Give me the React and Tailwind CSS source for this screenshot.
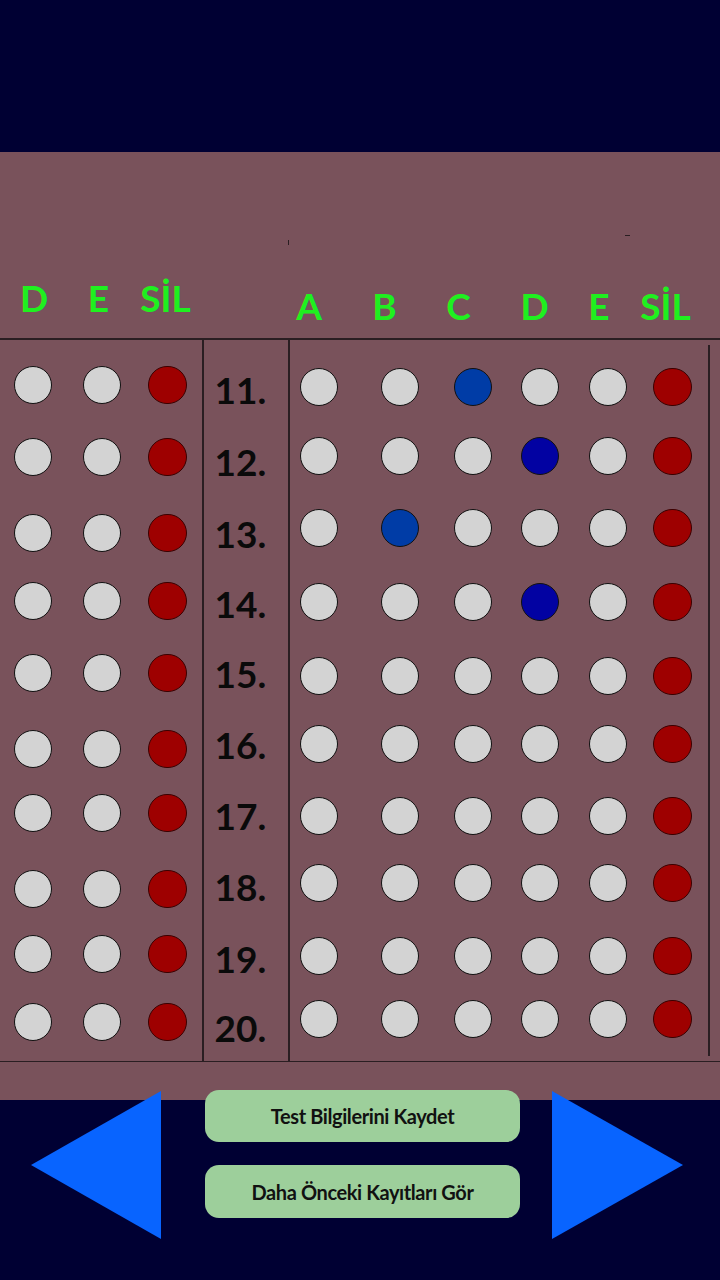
import React from "react";

const LEFT_GAPS = ["mt-[26px]", "mt-[34px]", "mt-[38px]", "mt-[30px]", "mt-[34px]", "mt-[38px]", "mt-[26px]", "mt-[38px]", "mt-[27px]", "mt-[30px]"];
const RIGHT_GAPS = ["mt-[28px]", "mt-[31px]", "mt-[34px]", "mt-[36px]", "mt-[36px]", "mt-[30px]", "mt-[34px]", "mt-[29px]", "mt-[35px]", "mt-[25px]"];
const NUM_GAPS = ["mt-[30px]", "mt-[32px]", "mt-[32px]", "mt-[30px]", "mt-[30px]", "mt-[31px]", "mt-[31px]", "mt-[31px]", "mt-[32px]", "mt-[29px]"];

// selected answers per row (index into A..E), -1 none
const SELECTED = [2, 3, 1, 3, -1, -1, -1, -1, -1, -1];
const SEL_COLORS = ["", "bg-[#003ca6]", "bg-[#003ca6]", "bg-[#0202a2]", ""];

function Dot({ color = "bg-[#d3d3d3]", ml = "" }) {
  return (
    <div className={`${ml} h-[38px] w-[38px] shrink-0 rounded-full border-[1.7px] border-[#111] ${color}`} />
  );
}

function Red({ ml = "" }) {
  return (
    <div className={`${ml} h-[38px] w-[39px] shrink-0 rounded-full border border-[#3a0000] bg-[#9e0000]`} />
  );
}

const RIGHT_ML = ["ml-[10px]", "ml-[43px]", "ml-[35px]", "ml-[29px]", "ml-[30px]"];

export default function App() {
  const font = { fontFamily: "Lato, 'Open Sans', sans-serif" };
  return (
    <div className="flex h-[1280px] w-[720px] flex-col overflow-hidden bg-[#000033]" style={font}>
      <div className="h-[152px] shrink-0 bg-[#000033]" />
      <div className="flex h-[948px] shrink-0 flex-col bg-[#79525b]">
        {/* header */}
        <div className="relative flex h-[186px] shrink-0 text-[37px] font-bold leading-[37px] text-[#1ff01f]">
          <div className="mt-[127px] flex">
            <div className="ml-[4px] w-[60px] text-center">D</div>
            <div className="ml-[4.5px] w-[60px] text-center">E</div>
            <div className="ml-[7px] w-[60px] text-center">SİL</div>
          </div>
          <div className="mt-[135px] flex">
            <div className="ml-[83.5px] w-[60px] text-center">A</div>
            <div className="ml-[15.5px] w-[60px] text-center">B</div>
            <div className="ml-[14px] w-[60px] text-center">C</div>
            <div className="ml-[16px] w-[60px] text-center">D</div>
            <div className="ml-[4.5px] w-[60px] text-center">E</div>
            <div className="ml-[6.5px] w-[60px] text-center">SİL</div>
          </div>
          <div className="absolute left-[288px] top-[88px] h-[5px] w-[1px] bg-[#2a1e22]" />
          <div className="absolute left-[625px] top-[83px] h-[1px] w-[5px] bg-[#2a1e22]" />
        </div>
        <div className="h-[1.5px] shrink-0 bg-[#2a1e22]" />
        {/* table */}
        <div className="flex h-[721px] shrink-0">
          <div className="flex w-[202px] shrink-0 flex-col">
            {LEFT_GAPS.map((g, i) => (
              <div key={i} className={`${g} flex h-[38px]`}>
                <Dot ml="ml-[14px]" />
                <Dot ml="ml-[30.5px]" />
                <Red ml="ml-[27px]" />
              </div>
            ))}
          </div>
          <div className="w-[1.5px] shrink-0 bg-[#2a1e22]" />
          <div className="flex w-[84.5px] shrink-0 flex-col pl-[11px] text-[37px] font-bold leading-[40px] text-[#0a0a0a]">
            {NUM_GAPS.map((g, i) => (
              <div key={i} className={`${g} h-[40px]`}>{i + 11}.</div>
            ))}
          </div>
          <div className="w-[1.5px] shrink-0 bg-[#2a1e22]" />
          <div className="flex w-[418.5px] shrink-0 flex-col">
            {RIGHT_GAPS.map((g, i) => (
              <div key={i} className={`${g} flex h-[38px]`}>
                {RIGHT_ML.map((ml, j) => (
                  <Dot key={j} ml={ml} color={SELECTED[i] === j ? SEL_COLORS[j] : "bg-[#d3d3d3]"} />
                ))}
                <Red ml="ml-[26.5px]" />
              </div>
            ))}
          </div>
          <div className="my-[5px] w-[1.5px] shrink-0 bg-[#2a1e22]" />
        </div>
        <div className="h-[1.5px] shrink-0 bg-[#2a1e22]" />
      </div>
      {/* bottom controls */}
      <div className="relative z-10 -mt-[10px] flex">
        <svg className="ml-[31px] mt-[1px] shrink-0" width="130" height="148" viewBox="0 0 130 148">
          <polygon points="0,74 130,0 130,148" fill="#0864ff" />
        </svg>
        <div className="ml-[44px] flex w-[315px] shrink-0 flex-col">
          <div className="flex h-[52px] items-center justify-center rounded-[14px] bg-[#9dcf9b] text-[20px] font-bold tracking-[-0.4px] text-[#111]">
            Test Bilgilerini Kaydet
          </div>
          <div className="mt-[23px] flex h-[53px] items-center justify-center rounded-[14px] bg-[#9dcf9b] text-[20px] font-bold tracking-[-0.4px] text-[#111]">
            Daha Önceki Kayıtları Gör
          </div>
        </div>
        <svg className="ml-[32px] mt-[1px] shrink-0" width="131" height="148" viewBox="0 0 131 148">
          <polygon points="0,0 131,74 0,148" fill="#0864ff" />
        </svg>
      </div>
    </div>
  );
}
